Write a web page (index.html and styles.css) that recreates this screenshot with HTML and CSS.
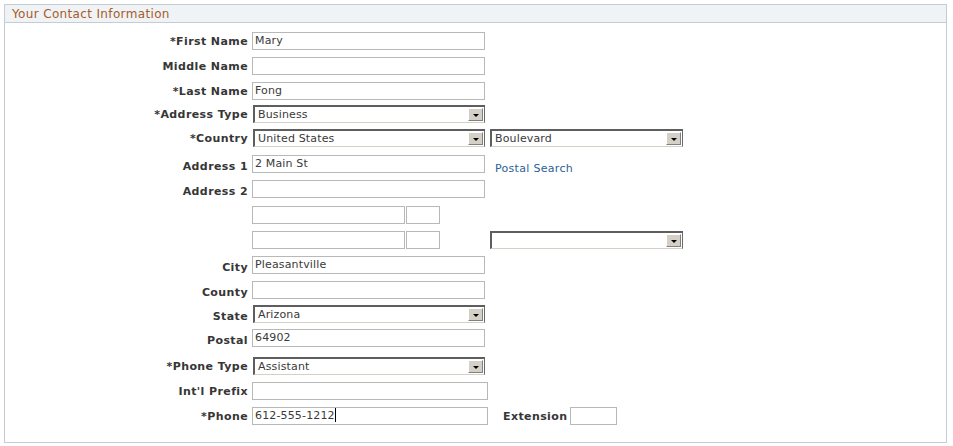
FILE: index.html
```html
<!DOCTYPE html>
<html>
<head>
<meta charset="utf-8">
<link rel="stylesheet" href="styles.css">
</head>
<body>
<div class="box">
  <div class="hdr">Your Contact Information</div>
  <div class="body">
    <div class="row first"><span class="lbl">*First Name</span><div class="inp w233">Mary</div></div>
    <div class="row"><span class="lbl">Middle Name</span><div class="inp w233"></div></div>
    <div class="row"><span class="lbl">*Last Name</span><div class="inp w233">Fong</div></div>
    <div class="row g5"><span class="lbl">*Address Type</span><div class="sel w232"><span class="val">Business</span><span class="btn"><i></i></span></div></div>
    <div class="row g6"><span class="lbl">*Country</span><div class="sel w232"><span class="val">United States</span><span class="btn"><i></i></span></div><div class="sel w193 col2"><span class="val">Boulevard</span><span class="btn"><i></i></span></div></div>
    <div class="row g8"><span class="lbl low">Address 1</span><div class="inp w233">2 Main St</div><a class="link" href="#">Postal Search</a></div>
    <div class="row"><span class="lbl low">Address 2</span><div class="inp w233"></div></div>
    <div class="row g8"><span class="lbl"></span><div class="inp w153"></div><div class="inp w34 sm2"></div></div>
    <div class="row"><span class="lbl"></span><div class="inp w153"></div><div class="inp w34 sm2"></div><div class="sel w193 col2b"><span class="val"></span><span class="btn"><i></i></span></div></div>
    <div class="row"><span class="lbl low">City</span><div class="inp w233">Pleasantville</div></div>
    <div class="row"><span class="lbl low">County</span><div class="inp w233"></div></div>
    <div class="row g6"><span class="lbl low">State</span><div class="sel w232"><span class="val">Arizona</span><span class="btn"><i></i></span></div></div>
    <div class="row g6"><span class="lbl low">Postal</span><div class="inp w233">64902</div></div>
    <div class="row g10"><span class="lbl">*Phone Type</span><div class="sel w232"><span class="val">Assistant</span><span class="btn"><i></i></span></div></div>
    <div class="row"><span class="lbl">Int'l Prefix</span><div class="inp w236"></div></div>
    <div class="row"><span class="lbl">*Phone</span><div class="inp w236">612-555-1212<span class="caret"></span></div><span class="lbl2">Extension</span><div class="inp w47"></div></div>
  </div>
</div>
</body>
</html>
```

FILE: styles.css
```css
html, body {
  margin: 0;
  padding: 0;
  background: #ffffff;
}
body {
  padding: 4px 0 0 4px;
  font-family: "DejaVu Sans", Verdana, sans-serif;
  font-size: 11px;
  color: #333333;
}
.box {
  width: 943px;
  height: 439px;
  box-sizing: border-box;
  border: 1px solid #c6ccd3;
  background: #ffffff;
}
.hdr {
  height: 17px;
  line-height: 18px;
  background: #eff3f5;
  border-bottom: 1px solid #c6ccd3;
  color: #a65b29;
  font-size: 12px;
  letter-spacing: 0.35px;
  padding-left: 7px;
}
.body {
  padding: 9px 0 17px 0;
}
.row {
  display: flex;
  align-items: center;
  height: 18px;
  margin-top: 7px;
}
.row.first { margin-top: 0; }
.row.g5 { margin-top: 5px; }
.row.g6 { margin-top: 6px; }
.row.g8 { margin-top: 8px; }
.row.g10 { margin-top: 10px; }
.lbl {
  flex: none;
  width: 243px;
  padding-right: 4px;
  text-align: right;
  font-weight: bold;
  color: #363636;
  letter-spacing: 0.4px;
  white-space: nowrap;
}
.lbl.low { margin-top: 4px; }
.lbl2 {
  font-weight: bold;
  color: #363636;
  letter-spacing: 0.4px;
  margin-left: 15px;
  margin-right: 3px;
  white-space: nowrap;
}
.inp {
  flex: none;
  box-sizing: border-box;
  height: 18px;
  border: 1px solid #b8b8b8;
  padding: 0 2px;
  line-height: 16px;
  color: #3a3a3a;
  letter-spacing: 0.15px;
  background: #ffffff;
  white-space: nowrap;
  overflow: hidden;
}
.w233 { width: 233px; }
.w236 { width: 236px; }
.w153 { width: 153px; }
.w34 { width: 34px; }
.w47 { width: 47px; }
.sm2 { margin-left: 1px; }
.caret {
  display: inline-block;
  width: 1px;
  height: 14px;
  background: #000000;
  vertical-align: -3px;
}
.sel {
  flex: none;
  display: flex;
  align-items: center;
  box-sizing: border-box;
  height: 18px;
  margin-left: 1px;
  border-top: 2px solid #5e5e5e;
  border-left: 2px solid #5e5e5e;
  border-right: 1px solid #6a6a6a;
  border-bottom: 1px solid #d4d0c8;
  background: #ffffff;
}
.w232 { width: 232px; }
.w193 { width: 193px; }
.col2 { margin-left: 5px; }
.col2b { margin-left: 50px; }
.sel .val {
  flex: 1;
  padding-left: 3px;
  line-height: 15px;
  color: #3a3a3a;
  letter-spacing: 0.15px;
  white-space: nowrap;
  overflow: hidden;
}
.sel .btn {
  flex: none;
  box-sizing: border-box;
  width: 15px;
  height: 13px;
  margin-right: 1px;
  background: #d4d0c8;
  border: 1px solid;
  border-color: #ffffff #808080 #808080 #ffffff;
  display: flex;
  align-items: center;
  justify-content: center;
}
.sel .btn i {
  display: block;
  width: 0;
  height: 0;
  border-left: 3px solid transparent;
  border-right: 3px solid transparent;
  border-top: 3px solid #000000;
  margin-top: 1px;
}
.link {
  margin-left: 10px;
  margin-top: 8px;
  color: #2b5f97;
  letter-spacing: 0.3px;
  text-decoration: none;
  white-space: nowrap;
}
```
